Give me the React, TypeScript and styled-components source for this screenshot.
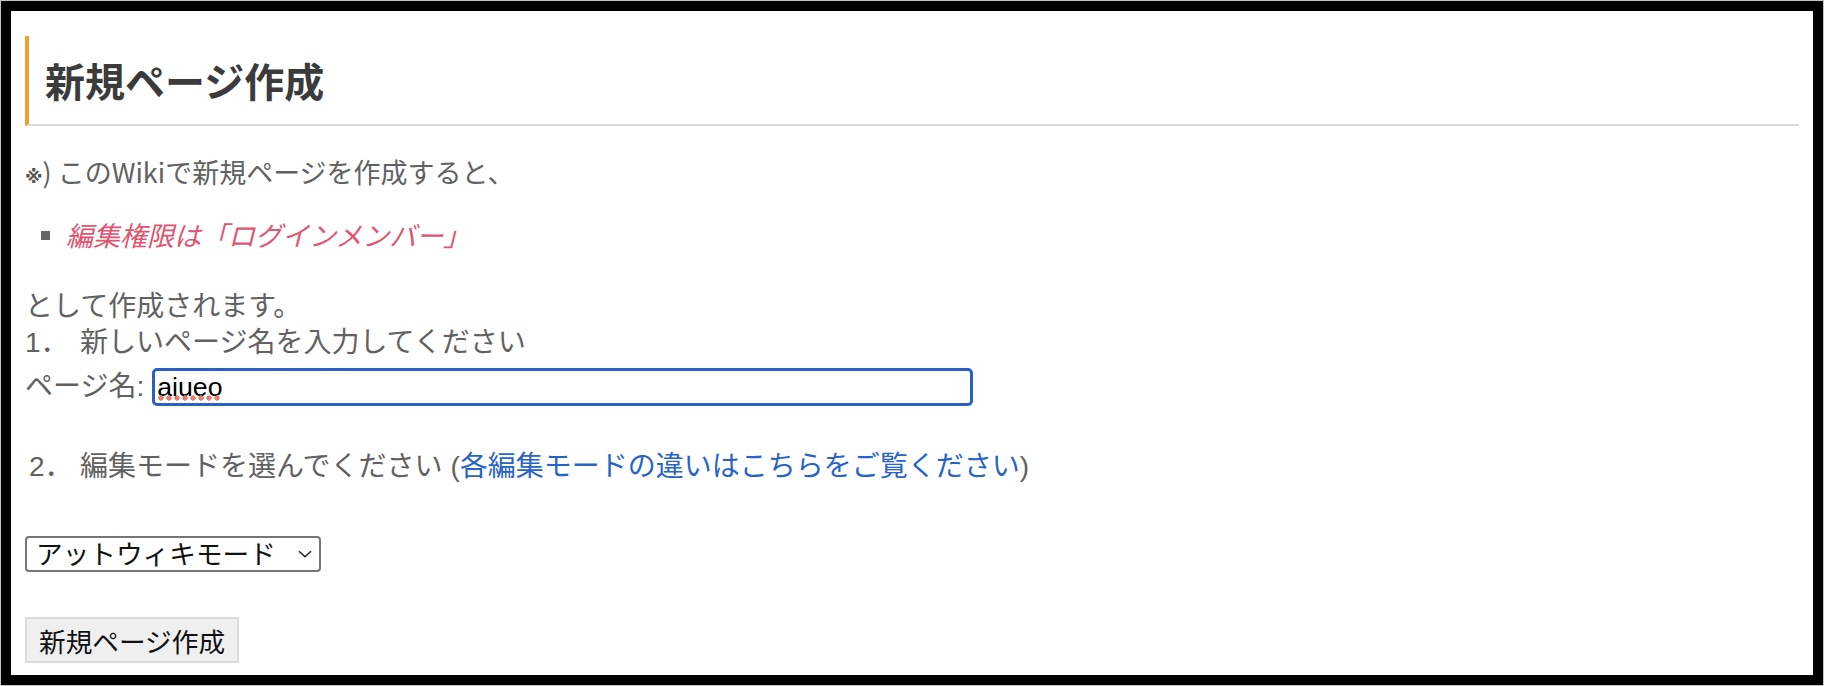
import styled, { createGlobalStyle } from 'styled-components';

const GlobalStyle = createGlobalStyle`
  html, body {
    margin: 0;
    padding: 0;
    background: #fff;
  }
  body {
    font-family: "Noto Sans CJK JP", sans-serif;
  }
`;

const Frame = styled.div`
  width: 1824px;
  height: 686px;
  box-sizing: border-box;
  border: 1px solid #c6c6c6;
  background: #000;
`;

const Page = styled.main`
  height: 100%;
  box-sizing: border-box;
  border: 10px solid #000;
  background: #fff;
  padding: 25px 14px 0;
  display: flex;
  flex-direction: column;
  color: #616161;
  overflow: hidden;
`;

const Title = styled.h2`
  margin: 0;
  padding: 14px 14px 14px 16px;
  font-family: "Noto Sans CJK JP", sans-serif;
  font-size: 40px;
  line-height: 60px;
  font-weight: 700;
  color: #3b3b3b;
  border-left: 4px solid #f09d33;
  border-bottom: 2px solid #d9d9d9;
`;

const Note = styled.p`
  margin: 28px 0 0;
  font-size: 27px;
  line-height: 36px;
`;

const Mark = styled.span`
  font-family: "DejaVu Sans", sans-serif;
  font-size: 18px;
  line-height: 0;
  font-weight: 700;
  color: #555;
`;

const Conditions = styled.ul`
  list-style: none;
  margin: 27px 0 0;
  padding: 0 0 0 16px;
`;

const Condition = styled.li`
  display: flex;
  align-items: center;
  gap: 16px;
  font-size: 27px;
  line-height: 36px;

  &::before {
    content: "";
    flex: none;
    width: 9px;
    height: 9px;
    background: #666;
  }
`;

const Emphasis = styled.em`
  color: #e0546f;
  font-style: italic;
`;

const Line = styled.div<{ $gap?: number; $indent?: number }>`
  margin-top: ${(p) => p.$gap ?? 0}px;
  padding-left: ${(p) => p.$indent ?? 0}px;
  font-family: "Liberation Sans", "Noto Sans CJK JP", sans-serif;
  font-size: 28px;
  line-height: 36px;
`;

const StepNo = styled.span<{ $width: number }>`
  display: inline-block;
  width: ${(p) => p.$width}px;
`;

const Field = styled.label`
  display: flex;
  align-items: center;
  gap: 8px;
  margin-top: 7px;
  font-family: "Liberation Sans", "Noto Sans CJK JP", sans-serif;
  font-size: 28px;
  line-height: 38px;
`;

const InputWrap = styled.span`
  position: relative;
  display: inline-flex;
`;

const TextInput = styled.input`
  width: 821px;
  height: 38px;
  box-sizing: border-box;
  border: 3px solid #2a5fc6;
  border-radius: 5px;
  padding: 0 2px;
  margin: 0;
  font-family: "Liberation Sans", Arial, sans-serif;
  font-size: 26.67px;
  color: #000;
  background: #fff;
  outline: none;
`;

const Squiggle = styled.span`
  position: absolute;
  left: 5px;
  top: 27px;
  width: 64px;
  height: 6px;
  background: radial-gradient(circle, #f07a6a 2.4px, transparent 2.9px) 0 0 / 8px 6px repeat-x;
  pointer-events: none;
`;

const HelpLink = styled.a`
  color: #2864c8;
  text-decoration: none;
`;

const SelectWrap = styled.div`
  position: relative;
  align-self: flex-start;
  margin-top: 51px;
`;

const ModeSelect = styled.select`
  appearance: none;
  display: block;
  width: 296px;
  height: 36px;
  box-sizing: border-box;
  margin: 0;
  border: 2px solid #767676;
  border-radius: 4px;
  background: #fff;
  padding: 0 0 2px 9px;
  font-family: "Noto Sans CJK JP", sans-serif;
  font-size: 26.67px;
  line-height: 30px;
  color: #111;
`;

const Chevron = styled.svg`
  position: absolute;
  right: 9px;
  top: 14px;
  pointer-events: none;
`;

const SubmitButton = styled.button`
  align-self: flex-start;
  margin-top: 45px;
  height: 46px;
  box-sizing: border-box;
  padding: 0 12px;
  border: 2px solid #dadada;
  border-radius: 0;
  background: #efefef;
  font-family: "Noto Sans CJK JP", sans-serif;
  font-size: 26.67px;
  color: #111;
`;

export default function App() {
  return (
    <>
      <GlobalStyle />
      <Frame>
        <Page>
          <Title>新規ページ作成</Title>

          <Note>
            <Mark>※</Mark>) このWikiで新規ページを作成すると、
          </Note>

          <Conditions>
            <Condition>
              <Emphasis>編集権限は「ログインメンバー」</Emphasis>
            </Condition>
          </Conditions>

          <Line $gap={36}>として作成されます。</Line>
          <Line>
            <StepNo $width={55}>1．</StepNo>新しいページ名を入力してください
          </Line>

          <Field>
            ページ名:
            <InputWrap>
              <TextInput type="text" defaultValue="aiueo" spellCheck={false} />
              <Squiggle />
            </InputWrap>
          </Field>

          <Line $gap={43} $indent={4}>
            <StepNo $width={51}>2．</StepNo>編集モードを選んでください (
            <HelpLink href="#">各編集モードの違いはこちらをご覧ください</HelpLink>)
          </Line>

          <SelectWrap>
            <ModeSelect defaultValue="atwiki">
              <option value="atwiki">アットウィキモード</option>
              <option value="wysiwyg">ワープロモード</option>
            </ModeSelect>
            <Chevron width="14" height="8" viewBox="0 0 14 8">
              <path d="M1 1.2 L7 6.8 L13 1.2" fill="none" stroke="#222" strokeWidth="1.5" />
            </Chevron>
          </SelectWrap>

          <SubmitButton type="button">新規ページ作成</SubmitButton>
        </Page>
      </Frame>
    </>
  );
}
